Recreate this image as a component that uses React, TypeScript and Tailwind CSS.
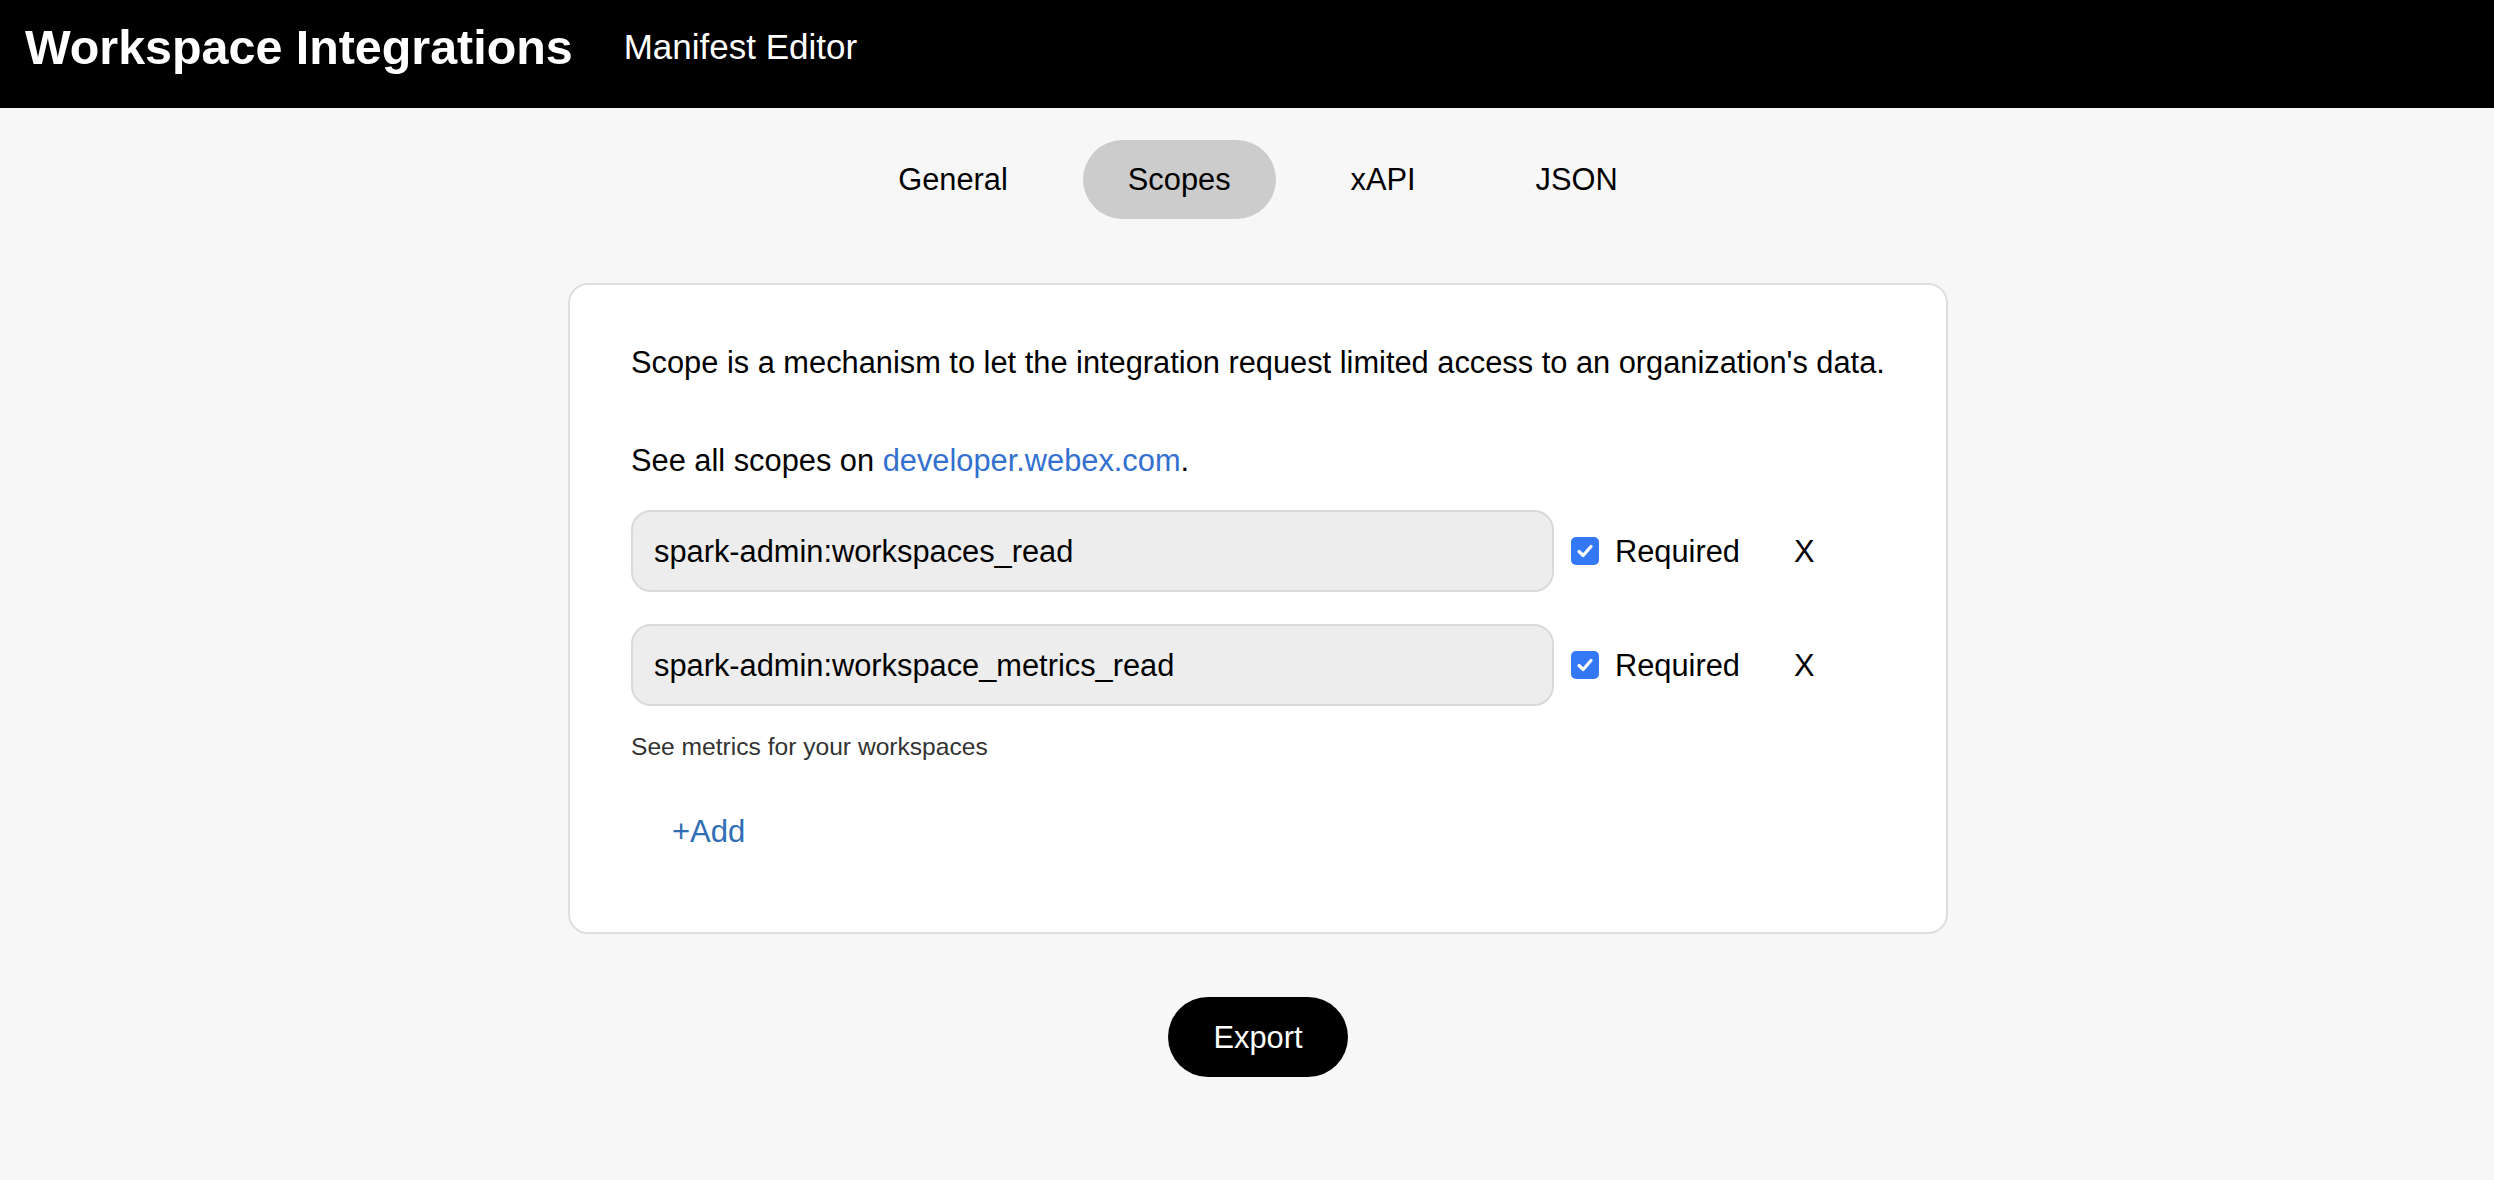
import React from 'react';

const tabs = ['General', 'Scopes', 'xAPI', 'JSON'];

const scopes = [
  { name: 'spark-admin:workspaces_read', required: true, note: '' },
  { name: 'spark-admin:workspace_metrics_read', required: true, note: 'See metrics for your workspaces' },
];

// Blue macOS style checkbox
const CheckBox: React.FC = () => (
  <span className="w-[28px] h-[28px] rounded-[5px] bg-[#3478f6] flex items-center justify-center shrink-0">
    <svg width="20" height="20" viewBox="0 0 20 20" fill="none">
      <path d="M4 10.5 L8.2 14.5 L16 5.5" stroke="white" strokeWidth="3.2" strokeLinecap="round" strokeLinejoin="round" />
    </svg>
  </span>
);

const App: React.FC = () => {
  return (
    <div className="min-h-[1180px] bg-[#f7f7f7] text-black font-['Liberation_Sans',Arial,sans-serif]">
      {/* Top bar */}
      <header className="h-[108px] bg-black flex items-center pl-[25px] pb-[14px] gap-[51px]">
        <h1 className="text-white font-bold text-[48.4px] leading-[55px]">Workspace Integrations</h1>
        <span className="text-white text-[35px] leading-[40px]">Manifest Editor</span>
      </header>

      <main className="flex flex-col items-center pl-[22px]">
        {/* Tabs */}
        <nav className="flex gap-[30px] mt-[32px]">
          {tabs.map((t) => (
            <button
              key={t}
              className={`h-[79px] px-[45px] rounded-full text-[30.8px] leading-[35px] text-black ${
                t === 'Scopes' ? 'bg-[#cccccc]' : 'bg-transparent'
              }`}
            >
              {t}
            </button>
          ))}
        </nav>

        {/* Card */}
        <section className="mt-[64px] w-[1380px] bg-white border-2 border-[#dedede] rounded-[20px] pl-[61px] pr-[60px] pt-[60px] pb-[83px]">
          <p className="text-[30.8px] leading-[35px]">
            Scope is a mechanism to let the integration request limited access to an organization's data.
          </p>
          <p className="text-[30.8px] leading-[35px] mt-[63px]">
            See all scopes on <a className="text-[#3370cf]">developer.webex.com</a>.
          </p>

          <div className="mt-[32px] flex flex-col gap-[32px]">
            {scopes.map((s) => (
              <div key={s.name}>
                <div className="flex items-center">
                  <div className="w-[923px] h-[82px] bg-[#ededed] border-2 border-[#d9d9d9] rounded-[20px] flex items-center pl-[21px] text-[30.8px] leading-[35px]">
                    {s.name}
                  </div>
                  <div className="ml-[17px]">
                    <CheckBox />
                  </div>
                  <span className="ml-[16px] text-[30.8px] leading-[35px]">Required</span>
                  <span className="ml-[54px] text-[30.8px] leading-[35px]">X</span>
                </div>
                {s.note && (
                  <p className="mt-[27px] text-[24.6px] leading-[28px] text-[#333333]">{s.note}</p>
                )}
              </div>
            ))}
          </div>

          <button className="mt-[53px] ml-[41px] text-[31px] leading-[35px] text-[#2f6db5]">+Add</button>
        </section>

        <button className="mt-[63px] h-[80px] px-[45px] rounded-full bg-black text-white text-[30.8px] leading-[35px]">
          Export
        </button>
      </main>
    </div>
  );
};

export default App;
